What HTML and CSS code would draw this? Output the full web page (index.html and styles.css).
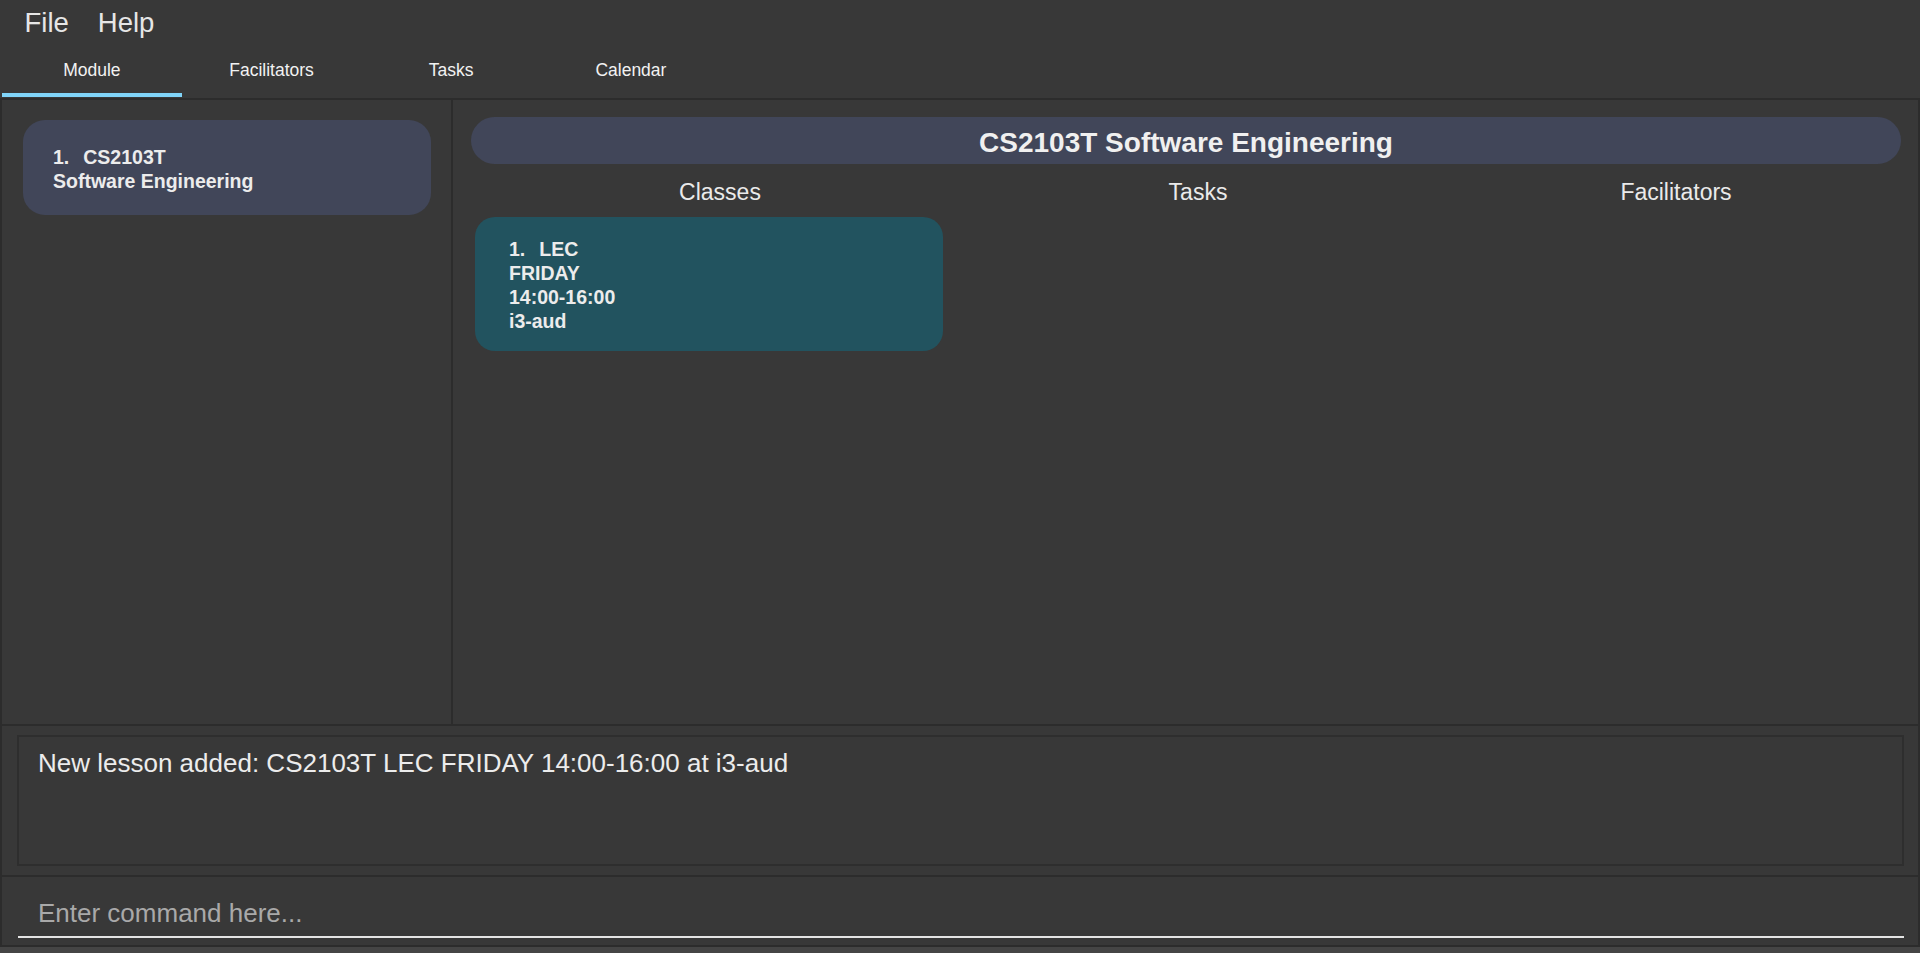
FILE: index.html
```html
<!DOCTYPE html>
<html>
<head>
<meta charset="utf-8">
<link rel="stylesheet" href="styles.css">
</head>
<body>
<div class="app">
  <div class="menubar">
    <span class="menu-item">File</span>
    <span class="menu-item">Help</span>
  </div>
  <div class="tabbar">
    <div class="tab active">Module</div>
    <div class="tab">Facilitators</div>
    <div class="tab">Tasks</div>
    <div class="tab">Calendar</div>
  </div>
  <div class="main">
    <div class="left-panel">
      <div class="module-card">
        <div><span class="idx">1.</span>CS2103T</div>
        <div>Software Engineering</div>
      </div>
    </div>
    <div class="right-panel">
      <div class="module-title">CS2103T Software Engineering</div>
      <div class="col-labels">
        <div class="col-label">Classes</div>
        <div class="col-label">Tasks</div>
        <div class="col-label">Facilitators</div>
      </div>
      <div class="lists">
        <div class="class-list">
          <div class="class-card">
            <div><span class="idx">1.</span>LEC</div>
            <div>FRIDAY</div>
            <div>14:00-16:00</div>
            <div>i3-aud</div>
          </div>
        </div>
      </div>
    </div>
  </div>
  <div class="result-panel">
    <div class="result-box">New lesson added: CS2103T LEC FRIDAY 14:00-16:00 at i3-aud</div>
  </div>
  <div class="command-panel">
    <div class="command-field">Enter command here...</div>
  </div>
  <div class="status-strip"></div>
</div>
</body>
</html>
```

FILE: styles.css
```css
* { box-sizing: border-box; }
html, body {
  margin: 0;
  padding: 0;
  background: #383838;
  font-family: "Liberation Sans", Arial, sans-serif;
  color: #eeeeee;
}
.app {
  width: 1920px;
  height: 953px;
  display: flex;
  flex-direction: column;
  overflow: hidden;
}
.menubar {
  height: 45px;
  padding: 1px 0 0 10px;
  display: flex;
  flex-shrink: 0;
}
.menu-item {
  font-size: 27.5px;
  line-height: 43px;
  padding: 0 14.5px;
  color: #e6e6e6;
}
.tabbar {
  height: 53px;
  flex-shrink: 0;
  display: flex;
  padding-left: 2px;
}
.tab {
  width: 179.7px;
  height: 52px;
  padding-top: 2px;
  line-height: 46px;
  font-size: 17.5px;
  text-align: center;
  color: #f2f2f2;
  border-bottom: 4px solid transparent;
}
.tab.active {
  border-bottom-color: #80d4f8;
}
.main {
  height: 628px;
  flex-shrink: 0;
  display: flex;
  border-top: 2px solid #2c2c2c;
  border-bottom: 2px solid #2c2c2c;
}
.left-panel {
  width: 453px;
  flex-shrink: 0;
  border-left: 2px solid #2c2c2c;
  border-right: 2px solid #2c2c2c;
  padding: 20px 20px 0 21px;
}
.module-card {
  height: 95px;
  background: #414659;
  border-radius: 22px;
  padding: 25px 0 0 30px;
  font-weight: bold;
  font-size: 19.5px;
  line-height: 24px;
  color: #ececec;
}
.idx {
  display: inline-block;
  margin-right: 14px;
}
.right-panel {
  flex: 1;
  min-width: 0;
  overflow: hidden;
  border-right: 2px solid #2c2c2c;
  padding: 17px 17px 0 18px;
}
.module-title {
  height: 47px;
  border-radius: 24px;
  background: #414659;
  padding-top: 4px;
  line-height: 43px;
  font-size: 28px;
  font-weight: bold;
  text-align: center;
  color: #f0f0f0;
}
.col-labels {
  display: grid;
  grid-template-columns: 478px 478px 478px;
  margin: 13px 0 0 10px;
  width: 1434px;
}
.col-label {
  text-align: center;
  font-size: 23px;
  line-height: 30px;
  color: #eaeaea;
}
.lists {
  margin-top: 10px;
  display: flex;
}
.class-list {
  width: 478px;
  padding-left: 4px;
  padding-right: 6px;
}
.class-card {
  height: 134px;
  background: #22535f;
  border-radius: 20px;
  padding: 20px 0 0 34px;
  font-weight: bold;
  font-size: 19.5px;
  line-height: 24px;
  color: #ececec;
}
.class-card .idx {
  margin-right: 14px;
}
.result-panel {
  height: 149px;
  flex-shrink: 0;
  border-left: 2px solid #2c2c2c;
  border-right: 2px solid #2c2c2c;
  padding: 9px 14px 9px 15px;
}
.result-box {
  height: 131px;
  border: 2px solid #2e2e2e;
  padding: 11px 0 0 19px;
  font-size: 26px;
  color: #ececec;
}
.command-panel {
  height: 72px;
  flex-shrink: 0;
  border: 2px solid #2c2c2c;
  padding: 12px 14px 0 16px;
}
.command-field {
  height: 49px;
  padding: 10px 0 0 20px;
  border-bottom: 2px solid #e4e4e4;
  font-size: 26px;
  line-height: 29px;
  color: #a9a9a9;
}
.status-strip {
  flex: 1;
  background: #454545;
}
```
